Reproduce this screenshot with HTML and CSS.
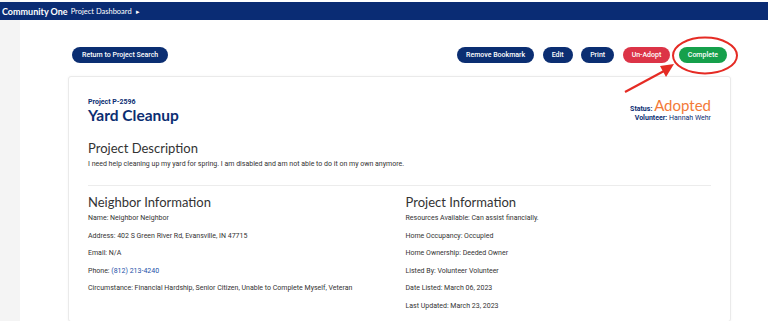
FILE: index.html
```html
<!DOCTYPE html>
<html lang="en">
<head>
  <meta charset="UTF-8" />
  <title>Project Dashboard</title>
  <link rel="stylesheet" href="styles.css">
</head>
<body>
  <header class="topbar">
    <span class="brand">Community One</span>
    <span class="crumb">Project Dashboard</span>
    <span class="caret">&#9656;</span>
  </header>

  <div class="page">
    <div class="actions">
      <button class="btn navy wide">Return to Project Search</button>
      <div class="actions-right">
        <button class="btn navy">Remove Bookmark</button>
        <button class="btn navy">Edit</button>
        <button class="btn navy">Print</button>
        <button class="btn red">Un-Adopt</button>
        <button class="btn green">Complete</button>
      </div>
    </div>

    <div class="card">
      <div class="card-head">
        <div>
          <div class="project-id">Project P-2596</div>
          <h1>Yard Cleanup</h1>
        </div>
        <div class="status">
          <div><b>Status:</b> <span class="adopted">Adopted</span></div>
          <div class="volunteer"><b>Volunteer:</b> Hannah Wehr</div>
        </div>
      </div>

      <h2>Project Description</h2>
      <p class="desc">I need help cleaning up my yard for spring. I am disabled and am not able to do it on my own anymore.</p>

      <hr>

      <div class="info-grid">
        <div>
          <h2>Neighbor Information</h2>
          <p>Name: Neighbor Neighbor</p>
          <p>Address: 402 S Green River Rd, Evansville, IN 47715</p>
          <p>Email: N/A</p>
          <p>Phone: <a href="#">(812) 213-4240</a></p>
          <p>Circumstance: Financial Hardship, Senior Citizen, Unable to Complete Myself, Veteran</p>
        </div>
        <div>
          <h2>Project Information</h2>
          <p>Resources Available: Can assist financially.</p>
          <p>Home Occupancy: Occupied</p>
          <p>Home Ownership: Deeded Owner</p>
          <p>Listed By: Volunteer Volunteer</p>
          <p>Date Listed: March 06, 2023</p>
          <p>Last Updated: March 23, 2023</p>
        </div>
      </div>
    </div>
  </div>

  <!-- annotation drawn over the screenshot -->
  <svg class="markup" width="768" height="321" viewBox="0 0 768 321">
    <ellipse cx="705" cy="55.5" rx="32" ry="18" fill="none" stroke="#e52b24" stroke-width="2"/>
    <line x1="625" y1="92" x2="664" y2="71" stroke="#e52b24" stroke-width="2.2"/>
    <polygon points="674,64 660,66 666,77" fill="#e52b24"/>
  </svg>
</body>
</html>
```

FILE: styles.css
```css
body {
  margin: 0;
  padding-top: 2px;
  font-family: Roboto, "Liberation Sans", sans-serif;
  color: #333;
  background: linear-gradient(to right, #f4f4f4 0, #f4f4f4 20px, #fff 20px);
  height: 319px;
  overflow: hidden;
}
.topbar {
  height: 18px;
  background-color: #0a2c74;
  color: #fff;
  display: flex;
  align-items: center;
  padding-left: 2px;
  font-family: Lato, "Noto Sans", sans-serif;
}
.brand {
  font-weight: bold;
  font-size: 9px;
  margin-right: 3px;
}
.crumb {
  font-size: 7.5px;
}
.caret {
  font-size: 7px;
  margin-left: 4px;
}
.page {
  width: 663px;
  margin: 27px 0 0 68px;
}
.actions {
  display: flex;
  justify-content: space-between;
  padding: 0 4px;
  margin-bottom: 13px;
}
.actions-right {
  display: flex;
  gap: 8.5px;
}
.btn {
  height: 16px;
  border: none;
  border-radius: 8px;
  padding: 0 9px;
  font-family: Roboto, "Liberation Sans", sans-serif;
  font-size: 7px;
  font-weight: 500;
  color: #fff;
  cursor: pointer;
}
.btn.wide { padding: 0 10px; }
.btn.navy { background-color: #0b2e72; }
.btn.red { background-color: #dc3447; }
.btn.green { background-color: #16a04b; }
.card {
  box-sizing: border-box;
  background: #fff;
  border: 1px solid #eaeaea;
  border-radius: 3px;
  box-shadow: 0 0 3px rgba(0,0,0,0.04);
  padding: 21px 19px 0 19px;
  height: 246px;
}
.card-head {
  display: flex;
  justify-content: space-between;
}
.project-id {
  font-size: 7px;
  font-weight: bold;
  color: #0b2e72;
  line-height: 9px;
}
h1 {
  margin: 0;
  font-family: Lato, "Noto Sans", sans-serif;
  font-size: 15.5px;
  line-height: 17px;
  color: #0b2e72;
}
.status {
  text-align: right;
  font-size: 7px;
  color: #0b2e72;
}
.adopted {
  font-family: Lato, "Noto Sans", sans-serif;
  font-size: 15px;
  color: #f37a38;
  line-height: 15px;
}
.volunteer {
  margin-top: 1px;
}
h2 {
  margin: 15px 0 0 0;
  font-family: Lato, "Noto Sans", sans-serif;
  font-weight: normal;
  font-size: 13px;
  line-height: 18px;
  color: #333;
}
p {
  margin: 0 0 8.6px 0;
  font-size: 7px;
  line-height: 9px;
}
.desc {
  margin-top: 3px;
}
hr {
  border: none;
  border-top: 1px solid #ececec;
  margin: 16px 0 0 0;
}
.info-grid {
  display: grid;
  grid-template-columns: 1fr 1fr;
  gap: 12px;
}
.info-grid h2 {
  margin-top: 7px;
  margin-bottom: 3px;
}
a {
  color: #1d50a8;
  text-decoration: none;
}
.markup {
  position: absolute;
  left: 0;
  top: 0;
  pointer-events: none;
}
```
